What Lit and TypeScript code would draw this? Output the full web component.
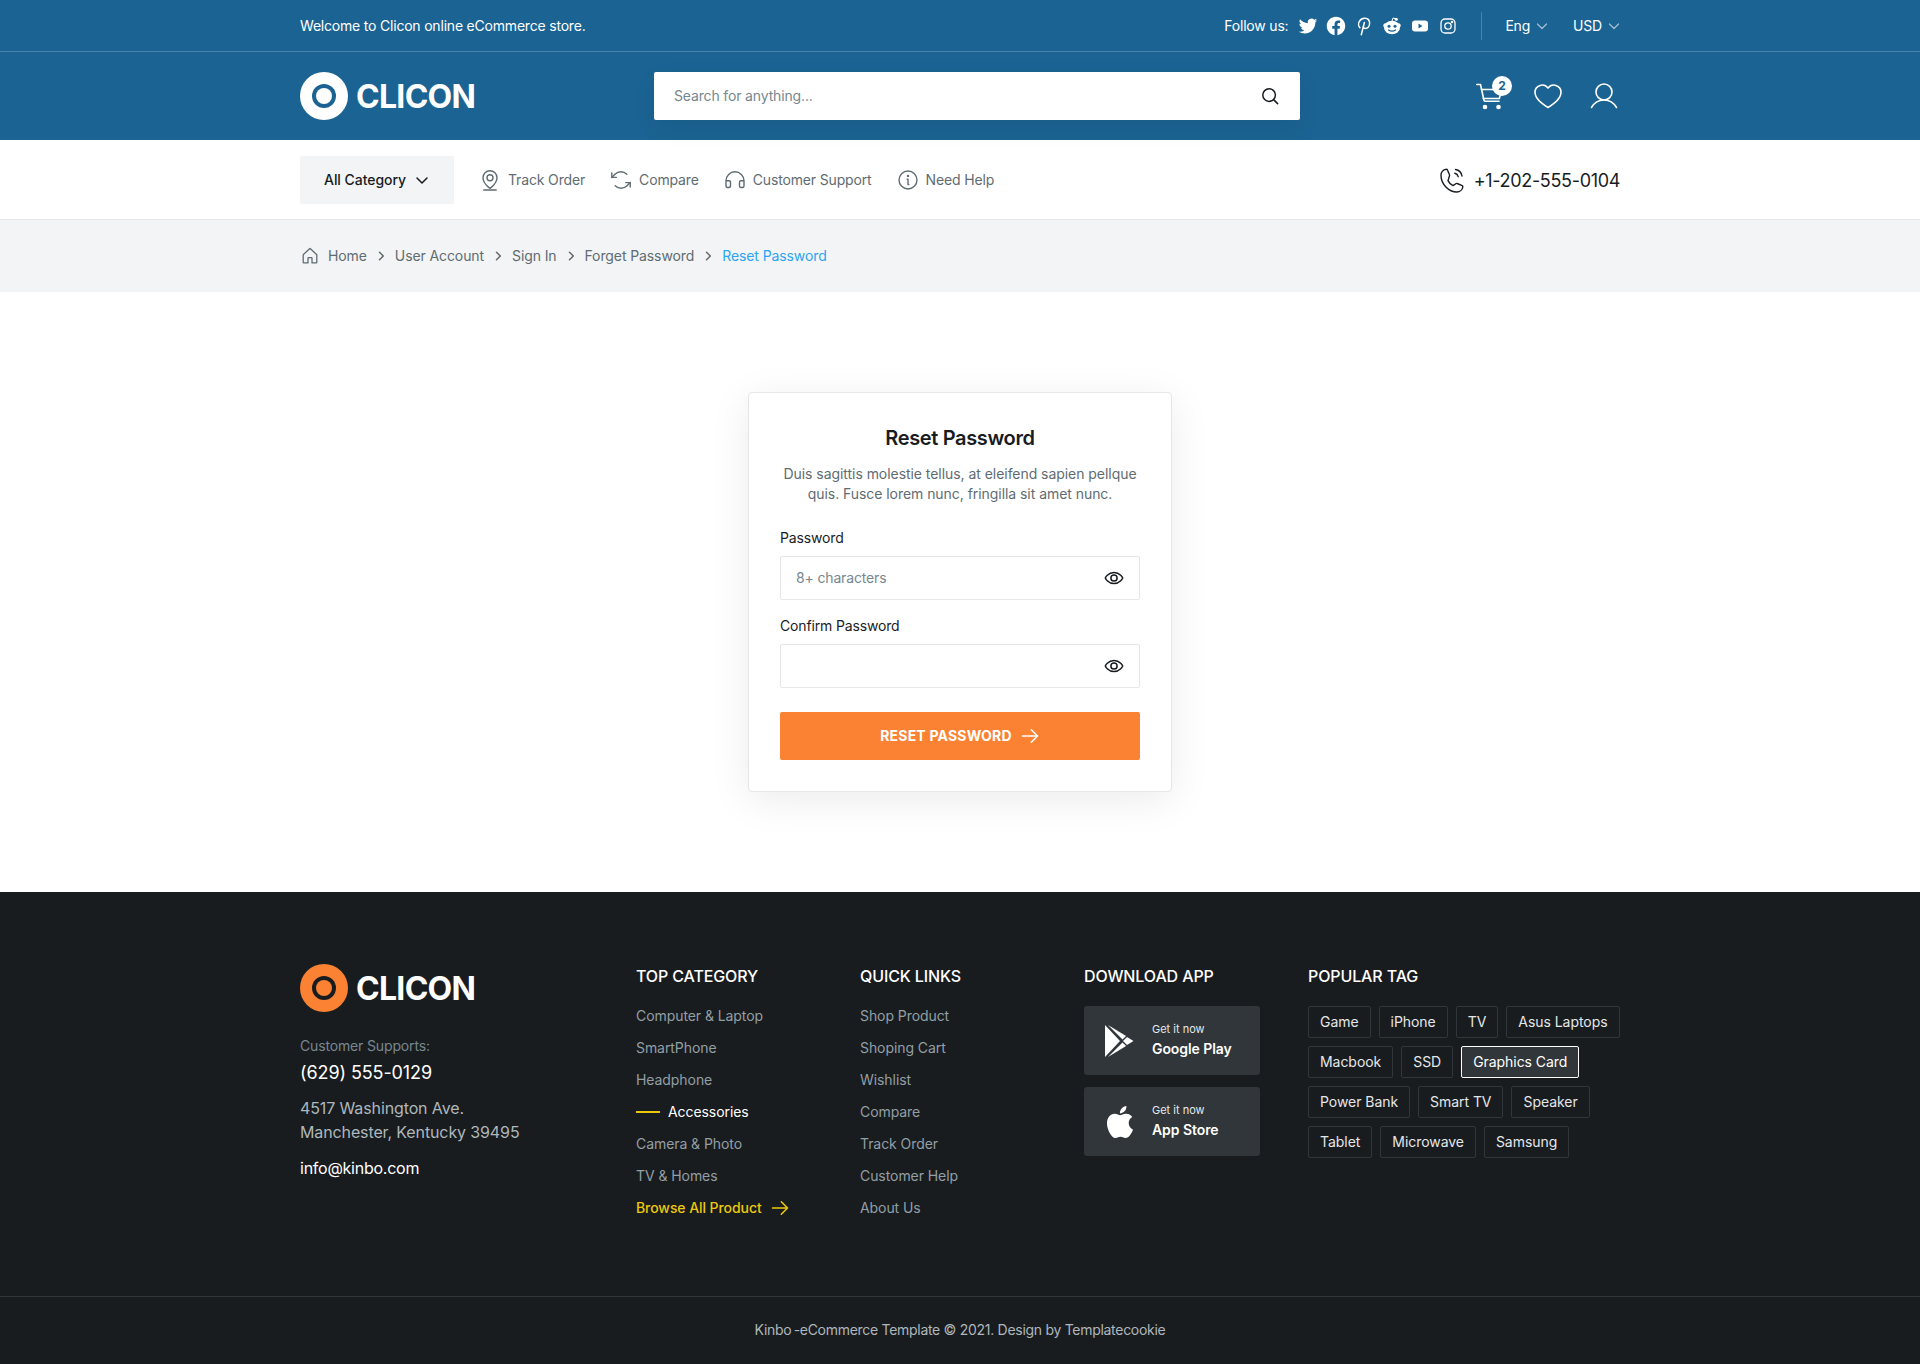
import { LitElement, css, html, svg } from "lit";
import { customElement } from "lit/decorators.js";

const CATEGORY_LINKS = ["Computer & Laptop", "SmartPhone", "Headphone", "Accessories", "Camera & Photo", "TV & Homes"];
const QUICK_LINKS = ["Shop Product", "Shoping Cart", "Wishlist", "Compare", "Track Order", "Customer Help", "About Us"];
const TAG_ROWS = [
	["Game", "iPhone", "TV", "Asus Laptops"],
	["Macbook", "SSD", "Graphics Card"],
	["Power Bank", "Smart TV", "Speaker"],
	["Tablet", "Microwave", "Samsung"]
];
const CRUMBS = ["User Account", "Sign In", "Forget Password"];

const chevronDown = html`<svg width="16" height="16" viewBox="0 0 16 16" fill="none" stroke="currentColor" stroke-width="1.5" stroke-linecap="round" stroke-linejoin="round"><path d="M3 6l5 5 5-5"/></svg>`;
const chevronSmall = html`<svg width="12" height="12" viewBox="0 0 12 12" fill="none" stroke="currentColor" stroke-width="1.2" stroke-linecap="round" stroke-linejoin="round"><path d="M1.500 4l4.500 4.500L10.500 4"/></svg>`;
const chevronRight = html`<svg width="12" height="12" viewBox="0 0 12 12" fill="none" stroke="#5f6c72" stroke-width="1.5" stroke-linecap="round" stroke-linejoin="round"><path d="M4.500 2.200L8.300 6l-3.800 3.800"/></svg>`;
const arrowRight = html`<svg width="20" height="20" viewBox="0 0 20 20" fill="none" stroke="currentColor" stroke-width="1.6" stroke-linecap="round" stroke-linejoin="round"><path d="M2.500 10h15M11.300 3.800L17.500 10l-6.200 6.200"/></svg>`;
const eye = html`<svg width="20" height="20" viewBox="0 0 20 20" fill="none" stroke="#191c1f" stroke-width="1.5" stroke-linecap="round" stroke-linejoin="round"><path d="M10 4.400C3.750 4.400 1.250 10 1.250 10s2.500 5.600 8.750 5.600 8.750-5.600 8.750-5.600S16.250 4.400 10 4.400z"/><circle cx="10" cy="10" r="3.100"/></svg>`;

const logo = (ring: string, fill: string) => html`<svg width="48" height="48" viewBox="0 0 48 48"><circle cx="24" cy="24" r="24" fill=${fill}/><circle cx="24" cy="24" r="12" fill=${ring}/><circle cx="24" cy="24" r="8" fill=${fill}/></svg>`;

const socials = [
	html`<svg width="20" height="20" viewBox="-1 -1 26 26" fill="#fff"><path d="M23.953 4.570a10 10 0 01-2.825.775 4.958 4.958 0 002.163-2.723c-.951.555-2.005.959-3.127 1.184a4.920 4.920 0 00-8.384 4.482C7.690 8.095 4.067 6.130 1.640 3.162a4.822 4.822 0 00-.666 2.475c0 1.710.870 3.213 2.188 4.096a4.904 4.904 0 01-2.228-.616v.060a4.923 4.923 0 003.946 4.827 4.996 4.996 0 01-2.212.085 4.936 4.936 0 004.604 3.417 9.867 9.867 0 01-6.102 2.105c-.390 0-.779-.023-1.170-.067a13.995 13.995 0 007.557 2.209c9.053 0 13.998-7.496 13.998-13.985 0-.210 0-.420-.015-.630A9.935 9.935 0 0024 4.590z"/></svg>`,
	html`<svg width="20" height="20" viewBox="-1 -1 26 26" fill="#fff"><path d="M24 12.073c0-6.627-5.373-12-12-12s-12 5.373-12 12c0 5.990 4.388 10.954 10.125 11.854v-8.385H7.078v-3.470h3.047V9.430c0-3.007 1.792-4.669 4.533-4.669 1.312 0 2.686.235 2.686.235v2.953H15.830c-1.491 0-1.956.925-1.956 1.874v2.250h3.328l-.532 3.470h-2.796v8.385C19.612 23.027 24 18.062 24 12.073z"/></svg>`,
	html`<svg width="20" height="20" viewBox="0 0 20 20" fill="none" stroke="#fff" stroke-width="1.500" stroke-linecap="round" stroke-linejoin="round"><path d="M5.900 11.800C4.400 10.300 4.200 7.300 5.400 5.300 6.600 3.200 8.900 2.200 11 2.300c2.700.2 4.600 2.200 4.600 4.800 0 3.100-1.800 5.400-4.100 5.400-1.200 0-2.200-.6-2.500-1.700M10.400 6.500L7.300 18.800"/></svg>`,
	html`<svg width="20" height="20" viewBox="0 0 20 20"><circle cx="3.500" cy="9.500" r="2.200" fill="#fff"/><circle cx="16.500" cy="9.500" r="2.200" fill="#fff"/><ellipse cx="10" cy="11.500" rx="8" ry="6.800" fill="#fff"/><circle cx="14.300" cy="3.200" r="1.500" fill="#fff"/><path d="M10 5l1-3 3.500 1" fill="none" stroke="#fff" stroke-width="1"/><circle cx="7" cy="10.300" r="1.500" fill="#1b6392"/><circle cx="13" cy="10.300" r="1.500" fill="#1b6392"/><path d="M6.500 14c2 1.400 5 1.400 7 0" fill="none" stroke="#1b6392" stroke-width="1.200" stroke-linecap="round"/></svg>`,
	html`<svg width="20" height="20" viewBox="0 0 20 20"><rect x="2" y="4.500" width="16" height="11" rx="3" fill="#fff"/><path d="M8.500 7.500l4 2.500-4 2.500z" fill="#1b6392"/></svg>`,
	html`<svg width="20" height="20" viewBox="0 0 20 20" fill="none" stroke="#fff" stroke-width="1.300"><rect x="3" y="3" width="14" height="14" rx="4"/><circle cx="10" cy="10" r="3.200"/><circle cx="14" cy="6" r=".6" fill="#fff"/></svg>`
];

const navItems = [
	{
		label: "Track Order",
		icon: svg`<path d="M12 2.800c-3.900 0-7 3.100-7 7 0 5.600 7 10.600 7 10.600s7-5 7-10.600c0-3.900-3.100-7-7-7z"/><circle cx="12" cy="9.800" r="3"/><path d="M5.800 22h12.400"/>`
	},
	{
		label: "Compare",
		icon: svg`<path d="M7.300 9.400H2.800V4.900"/><path d="M17.800 6.200A8.200 8.200 0 006 6.200L2.800 9.400"/><path d="M16.700 14.600h4.500v4.500"/><path d="M6.200 17.800a8.200 8.200 0 0011.800 0l3.200-3.200"/>`
	},
	{
		label: "Customer Support",
		icon: svg`<path d="M21 12.800h-3a1.500 1.500 0 00-1.500 1.500v3.700A1.500 1.500 0 0018 19.500h1.500A1.500 1.500 0 0021 18v-5.200zm0 0A9 9 0 003 12.800M3 12.800h3a1.500 1.500 0 011.500 1.500v3.700A1.500 1.500 0 016 19.500H4.500A1.500 1.500 0 013 18v-5.200z"/>`
	},
	{
		label: "Need Help",
		icon: svg`<circle cx="12" cy="12" r="9"/><path d="M11.200 11.200H12v5.300h.8"/><circle cx="12" cy="7.900" r=".5" fill="#5f6c72"/>`
	}
];

@customElement("app-root")
export class AppRoot extends LitElement {
	static styles = css`
	:host {
		display: block;
		font-family: "Inter", "Liberation Sans", sans-serif;
		font-size: 14px;
		line-height: 20px;
		letter-spacing: -0.15px;
		color: #191c1f;
		background: #fff;
	}
	* {
		box-sizing: border-box;
	}
	svg {
		display: block;
		flex: none;
	}
	.wrap {
		width: 1320px;
		margin: 0 auto;
		display: flex;
		align-items: center;
	}
	.topbar {
		height: 52px;
		background: #1b6392;
		border-bottom: 1px solid rgba(255, 255, 255, 0.2);
		color: #fff;
	}
	.topbar .wrap {
		height: 51px;
		justify-content: space-between;
		letter-spacing: -0.2px;
	}
	.top-right {
		display: flex;
		align-items: center;
	}
	.follow {
		margin-right: 10px;
	}
	.socials {
		display: flex;
		gap: 8px;
	}
	.divider {
		width: 1px;
		height: 28px;
		background: rgba(255, 255, 255, 0.2);
		margin: 0 23px;
	}
	.select {
		display: flex;
		align-items: center;
		gap: 6px;
		color: #fff;
	}
	.select svg {
		opacity: 0.6;
	}
	.select + .select {
		margin-left: 25px;
	}
	.header {
		height: 88px;
		background: #1b6392;
	}
	.header .wrap {
		height: 88px;
	}
	.brand {
		display: flex;
		align-items: center;
		gap: 8px;
		height: 48px;
		font-size: 32px;
		line-height: 48px;
		font-weight: 700;
		letter-spacing: -0.7px;
		color: #fff;
		width: 354px;
	}
	.brand span,
	.footer-brand span {
		margin-top: 2px;
	}
	.search {
		width: 646px;
		height: 48px;
		background: #fff;
		border-radius: 2px;
		display: flex;
		align-items: center;
		justify-content: space-between;
		padding: 0 20px;
		box-shadow: 0 8px 24px rgba(0, 0, 0, 0.06);
	}
	.search input,
	.field input {
		border: 0;
		outline: 0;
		flex: 1;
		font: inherit;
		letter-spacing: inherit;
		background: none;
		padding: 0;
	}
	.search input::placeholder,
	.field input::placeholder {
		color: #77878f;
		opacity: 1;
	}
	.actions {
		margin-left: auto;
		display: flex;
		align-items: center;
		gap: 24px;
	}
	.cart {
		position: relative;
		width: 34px;
	}
	.badge {
		position: absolute;
		left: 18px;
		top: -4px;
		width: 20px;
		height: 20px;
		border-radius: 50%;
		background: #fff;
		color: #1b6392;
		font-size: 12px;
		line-height: 20px;
		font-weight: 700;
		letter-spacing: 0;
		text-align: center;
	}
	.nav {
		height: 80px;
		border-bottom: 1px solid #e4e7e9;
		background: #fff;
	}
	.nav .wrap {
		height: 79px;
	}
	.all-cat {
		width: 154px;
		height: 48px;
		background: #f2f4f5;
		border-radius: 2px;
		display: flex;
		align-items: center;
		gap: 8px;
		padding-left: 24px;
		font-weight: 500;
		letter-spacing: -0.05px;
		margin-right: 24px;
	}
	.nav-links {
		display: flex;
		gap: 24px;
	}
	.nav-link {
		display: flex;
		align-items: center;
		gap: 6px;
		color: #5f6c72;
		letter-spacing: -0.15px;
	}
	.nav-phone {
		margin-left: auto;
		display: flex;
		align-items: center;
		gap: 8px;
		font-size: 18px;
		line-height: 24px;
		letter-spacing: -0.33px;
	}
	.nav-phone span {
		margin-top: 2px;
	}
	.crumbs-bar {
		height: 72px;
		background: #f2f4f5;
	}
	.crumbs {
		height: 72px;
		gap: 8px;
		color: #5f6c72;
		letter-spacing: -0.1px;
	}
	.crumbs .current {
		color: #2da5f3;
	}
	.main {
		height: 600px;
		display: flex;
		align-items: center;
		justify-content: center;
	}
	.card {
		width: 424px;
		height: 400px;
		background: #fff;
		border: 1px solid #e4e7e9;
		border-radius: 4px;
		padding: 31px;
		box-shadow: 0 8px 40px rgba(0, 0, 0, 0.08);
	}
	.card h1 {
		margin: 0;
		font-size: 20px;
		line-height: 28px;
		font-weight: 600;
		letter-spacing: -0.35px;
		text-align: center;
	}
	.card p {
		margin: 12px 0 0;
		color: #5f6c72;
		letter-spacing: -0.05px;
		text-align: center;
	}
	.label {
		margin-top: 24px;
		margin-bottom: 8px;
	}
	.label.second {
		margin-top: 16px;
	}
	.field {
		height: 44px;
		border: 1px solid #e4e7e9;
		border-radius: 2px;
		display: flex;
		align-items: center;
		padding: 0 15px;
	}
	.submit {
		margin-top: 24px;
		height: 48px;
		width: 100%;
		border: 0;
		border-radius: 2px;
		background: #fa8232;
		color: #fff;
		font: inherit;
		font-weight: 700;
		letter-spacing: 0.2px;
		display: flex;
		align-items: center;
		justify-content: center;
		gap: 8px;
		padding: 0;
	}
	.footer {
		background: #191c1f;
		color: #fff;
	}
	.footer-main {
		width: 1320px;
		margin: 0 auto;
		padding: 72px 0 78px;
		display: grid;
		grid-template-columns: 312px 200px 200px 200px 312px;
		gap: 24px;
	}
	.footer-brand {
		display: flex;
		align-items: center;
		gap: 8px;
		height: 48px;
		font-size: 32px;
		line-height: 48px;
		font-weight: 700;
		letter-spacing: -0.7px;
	}
	.muted {
		color: #77878f;
		margin-top: 24px;
	}
	.phone {
		font-size: 18px;
		line-height: 24px;
		margin-top: 5px;
		letter-spacing: -0.1px;
	}
	.address {
		font-size: 16px;
		line-height: 24px;
		color: #adb7bc;
		margin-top: 11px;
		letter-spacing: -0.12px;
	}
	.email {
		font-size: 16px;
		line-height: 24px;
		margin-top: 12px;
		letter-spacing: -0.25px;
	}
	.col h2 {
		margin: 0 0 18px;
		font-size: 16px;
		line-height: 24px;
		font-weight: 500;
		letter-spacing: -0.12px;
		text-transform: uppercase;
	}
	.links {
		display: flex;
		flex-direction: column;
		gap: 12px;
		color: #929fa5;
		letter-spacing: -0.07px;
	}
	.links .active {
		color: #fff;
		display: flex;
		align-items: center;
		gap: 8px;
	}
	.links .active::before {
		content: "";
		width: 24px;
		height: 2px;
		background: #ebc80c;
	}
	.links .browse {
		color: #ebc80c;
		font-weight: 500;
		display: flex;
		align-items: center;
		gap: 8px;
	}
	.apps {
		display: flex;
		flex-direction: column;
		gap: 12px;
	}
	.app {
		width: 176px;
		height: 69px;
		background: #303639;
		border-radius: 3px;
		display: flex;
		align-items: center;
		gap: 16px;
		padding-left: 20px;
	}
	.app-text {
		margin-top: -2px;
	}
	.app-small {
		font-size: 11px;
		line-height: 16px;
		color: #e4e7e9;
		letter-spacing: 0;
	}
	.app-name {
		font-weight: 600;
		letter-spacing: -0.07px;
		margin-top: 2px;
	}
	.tags {
		display: flex;
		flex-direction: column;
		gap: 8px;
	}
	.tag-row {
		display: flex;
		gap: 8px;
	}
	.tag {
		flex: none;
		height: 32px;
		border: 1px solid #303639;
		border-radius: 2px;
		padding: 0 11px;
		line-height: 30px;
		white-space: nowrap;
		letter-spacing: -0.05px;
		color: #e4e7e9;
	}
	.tag.on {
		background: #303639;
		border-color: #fff;
		color: #fff;
	}
	.copy {
		height: 68px;
		padding-bottom: 2px;
		border-top: 1px solid #303639;
		display: flex;
		align-items: center;
		justify-content: center;
		color: #adb7bc;
		letter-spacing: -0.29px;
	}
	`;

	render() {
		return html`
			<div class="topbar">
				<div class="wrap">
					<span>Welcome to Clicon online eCommerce store.</span>
					<div class="top-right">
						<span class="follow">Follow us:</span>
						<div class="socials">${socials}</div>
						<div class="divider"></div>
						<div class="select">Eng ${chevronSmall}</div>
						<div class="select">USD ${chevronSmall}</div>
					</div>
				</div>
			</div>
			<div class="header">
				<div class="wrap">
					<div class="brand">${logo("#1b6392", "#fff")}<span>CLICON</span></div>
					<div class="search">
						<input placeholder="Search for anything..." />
						<svg width="20" height="20" viewBox="0 0 20 20" fill="none" stroke="#191c1f" stroke-width="1.500" stroke-linecap="round"><circle cx="9.100" cy="9.100" r="6.300"/><path d="M13.600 13.600l4 4"/></svg>
					</div>
					<div class="actions">
						<div class="cart">
							<svg width="32" height="32" viewBox="0 0 32 32" fill="none" stroke="#fff" stroke-width="1.600" stroke-linecap="round" stroke-linejoin="round"><path d="M2.800 4.500h3.700l3.400 15.500c.2.800.8 1.300 1.600 1.300h13.500"/><path d="M7.500 9.500H28l-2.700 9H9.300"/><circle cx="11" cy="27" r="1.500" fill="#fff"/><circle cx="24.500" cy="27" r="1.500" fill="#fff"/></svg>
							<div class="badge">2</div>
						</div>
						<svg width="32" height="32" viewBox="0 0 32 32" fill="none" stroke="#fff" stroke-width="1.600" stroke-linejoin="round"><path d="M16 27.500S3 20.500 3 12.200A7.200 7.200 0 0116 8a7.200 7.200 0 0113 4.200C29 20.500 16 27.500 16 27.500z"/></svg>
						<svg width="32" height="32" viewBox="0 0 32 32" fill="none" stroke="#fff" stroke-width="1.600" stroke-linecap="round"><circle cx="16" cy="12" r="8"/><path d="M3.500 27.500C6 23.200 10.600 20 16 20s10 3.200 12.500 7.500"/></svg>
					</div>
				</div>
			</div>
			<div class="nav">
				<div class="wrap">
					<div class="all-cat">All Category ${chevronDown}</div>
					<div class="nav-links">
						${navItems.map(
							(item) => html`<div class="nav-link">
								<svg width="24" height="24" viewBox="0 0 24 24" fill="none" stroke="#5f6c72" stroke-width="1.400" stroke-linecap="round" stroke-linejoin="round">${item.icon}</svg>
								<span>${item.label}</span>
							</div>`
						)}
					</div>
					<div class="nav-phone">
						<svg width="28" height="28" viewBox="0 0 28 28" fill="none" stroke="#191c1f" stroke-width="1.400" stroke-linecap="round" stroke-linejoin="round"><path d="M17.500 3.500a8 8 0 016.500 6.500M16.800 7.300a4.500 4.500 0 013.400 3.400"/><path d="M10 14.600a10 10 0 005 5l3.200-2.100a1 1 0 011 0l5 2.200a1 1 0 01.600 1.100 6 6 0 01-6 5.200C10.800 26 3 18.200 3 9.200a6 6 0 015.200-6 1 1 0 011.100.600l2.200 5a1 1 0 010 1z"/></svg>
						<span>+1-202-555-0104</span>
					</div>
				</div>
			</div>
			<div class="crumbs-bar">
				<div class="wrap crumbs">
					<svg width="20" height="20" viewBox="0 0 20 20" fill="none" stroke="#5f6c72" stroke-width="1.300" stroke-linejoin="round"><path d="M12 16.900v-4.700a.6.6 0 00-.6-.6H8.600a.6.6 0 00-.6.600v4.700H3.800a.6.6 0 01-.6-.6V8.800a.6.6 0 01.2-.4l6.200-5.700a.6.6 0 01.8 0l6.200 5.700a.6.6 0 01.2.4v7.500a.6.6 0 01-.6.600z"/></svg>
					<span>Home</span>
					${CRUMBS.map((crumb) => html`${chevronRight}<span>${crumb}</span>`)}
					${chevronRight}
					<span class="current">Reset Password</span>
				</div>
			</div>
			<div class="main">
				<div class="card">
					<h1>Reset Password</h1>
					<p>Duis sagittis molestie tellus, at eleifend sapien pellque quis. Fusce lorem nunc, fringilla sit amet nunc.</p>
					<div class="label">Password</div>
					<div class="field"><input placeholder="8+ characters" />${eye}</div>
					<div class="label second">Confirm Password</div>
					<div class="field"><input />${eye}</div>
					<button class="submit">RESET PASSWORD ${arrowRight}</button>
				</div>
			</div>
			<div class="footer">
				<div class="footer-main">
					<div>
						<div class="footer-brand">${logo("#191c1f", "#fa8232")}<span>CLICON</span></div>
						<div class="muted">Customer Supports:</div>
						<div class="phone">(629) 555-0129</div>
						<div class="address">4517 Washington Ave.<br />Manchester, Kentucky 39495</div>
						<div class="email">info@kinbo.com</div>
					</div>
					<div class="col">
						<h2>Top Category</h2>
						<div class="links">
							${CATEGORY_LINKS.map((link) => html`<div class=${link === "Accessories" ? "active" : ""}>${link}</div>`)}
							<div class="browse">Browse All Product ${arrowRight}</div>
						</div>
					</div>
					<div class="col">
						<h2>Quick Links</h2>
						<div class="links">${QUICK_LINKS.map((link) => html`<div>${link}</div>`)}</div>
					</div>
					<div class="col">
						<h2>Download App</h2>
						<div class="apps">
							<div class="app">
								<svg width="32" height="32" viewBox="0 0 32 32" fill="#fff"><path d="M1 0v32l15-16z"/><path d="M4 0l14.500 14.500 3.600-3.600z"/><path d="M4 32l14.500-14.500 3.600 3.600z"/><path d="M23 12l6.500 4-6.500 4-4-4z"/></svg>
								<div class="app-text"><div class="app-small">Get it now</div><div class="app-name">Google Play</div></div>
							</div>
							<div class="app">
								<svg width="32" height="32" viewBox="0 0 24 24" fill="#fff"><path d="M12.152 6.896c-.948 0-2.415-1.078-3.960-1.040-2.040.027-3.910 1.183-4.961 3.014-2.117 3.675-.546 9.103 1.519 12.090 1.013 1.454 2.208 3.090 3.792 3.039 1.520-.065 2.090-.987 3.935-.987 1.831 0 2.350.987 3.960.948 1.637-.026 2.676-1.480 3.676-2.948 1.156-1.688 1.636-3.325 1.662-3.415-.039-.013-3.182-1.221-3.220-4.857-.026-3.040 2.480-4.494 2.597-4.559-1.429-2.090-3.623-2.324-4.390-2.376-2-.156-3.675 1.090-4.610 1.090zM15.530 3.830c.843-1.012 1.400-2.427 1.245-3.830-1.207.052-2.662.805-3.532 1.818-.780.896-1.454 2.338-1.273 3.714 1.338.104 2.715-.688 3.559-1.701"/></svg>
								<div class="app-text"><div class="app-small">Get it now</div><div class="app-name">App Store</div></div>
							</div>
						</div>
					</div>
					<div class="col">
						<h2>Popular Tag</h2>
						<div class="tags">
							${TAG_ROWS.map(
								(row) => html`<div class="tag-row">
									${row.map((tag) => html`<div class="tag ${tag === "Graphics Card" ? "on" : ""}">${tag}</div>`)}
								</div>`
							)}
						</div>
					</div>
				</div>
				<div class="copy">Kinbo&thinsp;-eCommerce Template © 2021. Design by Templatecookie</div>
			</div>
		`;
	}
}
